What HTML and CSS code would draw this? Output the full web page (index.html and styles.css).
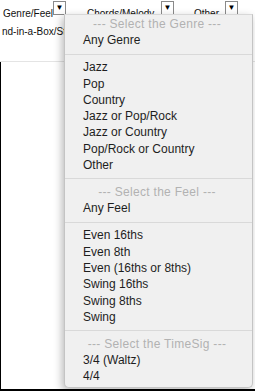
FILE: index.html
```html
<!DOCTYPE html>
<html lang="en">
<head>
    <meta charset="UTF-8">
    <meta name="viewport" content="width=device-width, initial-scale=1.0">
    <title>Genre / Feel Filter</title>
    <link rel="stylesheet" href="styles.css">
</head>
<body>
    <div class="frame">
        <div class="toolbar">
            <span class="label label-genre">Genre/Feel</span>
            <span class="drop">&#9660;</span>
            <span class="label label-chords">Chords/Melody</span>
            <span class="drop">&#9660;</span>
            <span class="label label-other">Other</span>
            <span class="drop">&#9660;</span>
        </div>
        <div class="field-row">nd-in-a-Box/Styles</div>
        <div class="lower"></div>

        <!-- open dropdown for Genre/Feel -->
        <div class="menu">
            <div class="menu-head">--- Select the Genre ---</div>
            <div class="menu-item">Any Genre</div>
            <div class="menu-sep"></div>
            <div class="menu-item">Jazz</div>
            <div class="menu-item">Pop</div>
            <div class="menu-item">Country</div>
            <div class="menu-item">Jazz or Pop/Rock</div>
            <div class="menu-item">Jazz or Country</div>
            <div class="menu-item">Pop/Rock or Country</div>
            <div class="menu-item">Other</div>
            <div class="menu-sep"></div>
            <div class="menu-head">--- Select the Feel ---</div>
            <div class="menu-item">Any Feel</div>
            <div class="menu-sep"></div>
            <div class="menu-item">Even 16ths</div>
            <div class="menu-item">Even 8th</div>
            <div class="menu-item">Even (16ths or 8ths)</div>
            <div class="menu-item">Swing 16ths</div>
            <div class="menu-item">Swing 8ths</div>
            <div class="menu-item">Swing</div>
            <div class="menu-sep"></div>
            <div class="menu-head">--- Select the TimeSig ---</div>
            <div class="menu-item">3/4 (Waltz)</div>
            <div class="menu-item">4/4</div>
        </div>
    </div>
</body>
</html>
```

FILE: styles.css
```css
html, body {
    margin: 0;
    padding: 0;
}
body {
    background: #000;
    width: 255px;
    height: 391px;
    overflow: hidden;
    font-family: "Liberation Sans", Arial, sans-serif;
}
.frame {
    position: relative;
    background: #fff;
    height: 389px;
    display: flex;
    flex-direction: column;
}
.toolbar {
    height: 18px;
    display: flex;
    align-items: flex-start;
    font-size: 10px;
    color: #111;
}
.label {
    line-height: 12px;
    padding-top: 8px;
    white-space: nowrap;
}
.label-genre {
    margin-left: 3px;
    width: 50px;
}
.label-chords {
    margin-left: 21px;
    width: 74px;
}
.label-other {
    margin-left: 20px;
    width: 31px;
}
.drop {
    box-sizing: border-box;
    width: 13px;
    height: 14px;
    margin-top: 1px;
    border: 1px solid #8a8a8a;
    background: #fff;
    font-size: 8px;
    line-height: 12px;
    text-align: center;
    color: #000;
}
.field-row {
    font-size: 10px;
    line-height: 12px;
    padding: 8px 0 23px 2px;
    color: #111;
    white-space: nowrap;
    overflow: hidden;
    border-bottom: 1px solid #e4e4e4;
}
.lower {
    flex: 1;
    border-left: 1px solid #000;
    background: #fff;
}
.menu {
    position: absolute;
    left: 64px;
    top: 14px;
    width: 189px;
    box-sizing: border-box;
    padding: 1px 0 2px;
    background: #f0f0f0;
    border: 1px solid #c4c4c4;
    border-top-color: #d8d8d8;
    border-radius: 0 0 5px 5px;
    box-shadow: -2px 3px 8px rgba(0, 0, 0, 0.28);
    font-size: 12px;
}
.menu-item,
.menu-head {
    height: 16.3px;
    line-height: 16.3px;
    white-space: nowrap;
}
.menu-item {
    padding-left: 18px;
    color: #1e1e1e;
}
.menu-head {
    text-align: center;
    color: #b2b2b2;
    letter-spacing: 0.3px;
    padding-right: 3px;
}
.menu-sep {
    height: 1px;
    background: #d9d9d9;
    margin: 5px 0 4.7px;
}
```
